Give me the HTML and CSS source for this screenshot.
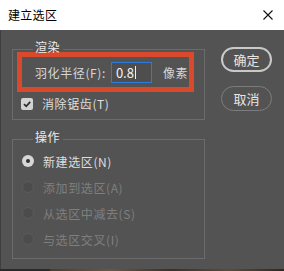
FILE: index.html
```html
<!DOCTYPE html>
<html lang="zh">
<head>
<meta charset="utf-8">
<title>建立选区</title>
<link rel="stylesheet" href="styles.css">
</head>
<body>
<div class="win">
  <div class="titlebar">
    <span class="title">建立选区</span>
    <svg class="close" viewBox="0 0 10 10" width="10" height="10"><path d="M0.5 0.5 L9.5 9.5 M9.5 0.5 L0.5 9.5" stroke="#111" stroke-width="1.1" fill="none"/></svg>
  </div>
  <div class="main">
    <div class="left">
      <div class="group g1">
        <div class="group-head"><span class="legend">渲染</span></div>
        <div class="group-body">
          <div class="mark">
            <span class="label">羽化半径(F):</span>
            <span class="field"><span class="val">0.8</span><span class="caret"></span></span>
            <span class="unit">像素</span>
          </div>
          <div class="check">
            <span class="box"><svg viewBox="0 0 12 12" width="12" height="12"><path d="M3 6.2 L5.2 8.3 L9.2 3.8" stroke="#2e2e2e" stroke-width="1.8" fill="none"/></svg></span>
            <span class="label">消除锯齿(T)</span>
          </div>
        </div>
      </div>
      <div class="group g2">
        <div class="group-head"><span class="legend">操作</span></div>
        <div class="group-body">
          <div class="radio on"><span class="dot"></span><span class="label">新建选区(N)</span></div>
          <div class="radio off"><span class="dot"></span><span class="label">添加到选区(A)</span></div>
          <div class="radio off"><span class="dot"></span><span class="label">从选区中减去(S)</span></div>
          <div class="radio off"><span class="dot"></span><span class="label">与选区交叉(I)</span></div>
        </div>
      </div>
    </div>
    <div class="right">
      <button class="btn primary">确定</button>
      <button class="btn">取消</button>
    </div>
  </div>
  <div class="strip"></div>
</div>
</body>
</html>
```
FILE: styles.css
```css
* { box-sizing: border-box; }
html, body { margin: 0; padding: 0; }
body {
  width: 284px;
  height: 271px;
  overflow: hidden;
  background: #2e2e2e;
  font-family: "Noto Sans CJK SC", "Microsoft YaHei", sans-serif;
  font-size: 12px;
}
.win {
  display: flex;
  flex-direction: column;
  height: 271px;
}
.titlebar {
  height: 30px;
  flex: none;
  background: #ffffff;
  display: flex;
  align-items: center;
  justify-content: space-between;
  padding: 0 11px 0 8px;
  color: #000;
}
.title { line-height: 12px; font-size: 12px; letter-spacing: 0.3px; }
.close { display: block; }
.main {
  height: 239px;
  flex: none;
  background: #535353;
  border-left: 1px solid #3f3f3f;
  display: flex;
  padding: 11px 0 0 11px;
}
.left {
  width: 193px;
  display: flex;
  flex-direction: column;
}
.label { letter-spacing: 0.6px; }
.group-head {
  display: flex;
  height: 12px;
  line-height: 12px;
  color: #ededed;
}
.group-head::before {
  content: "";
  width: 20px;
  margin-top: 8px;
  border-top: 1px solid #6b6b6b;
  border-left: 1px solid #6b6b6b;
}
.group-head::after {
  content: "";
  flex: 1;
  margin-top: 8px;
  border-top: 1px solid #6b6b6b;
  border-right: 1px solid #6b6b6b;
}
.legend { padding: 0 3px 0 2px; letter-spacing: 0.5px; }
.group-body {
  border: 1px solid #6b6b6b;
  border-top: none;
}
.g1 .group-body { padding: 0 0 9px 4px; }
.mark {
  width: 177px;
  height: 40px;
  margin-top: -1px;
  border: 5px solid #d84a2b;
  display: flex;
  align-items: center;
  padding-left: 13px;
  color: #d6d6d6;
}
.field {
  width: 41px;
  height: 21px;
  margin-left: 5px;
  border: 1px solid #2f7bdc;
  background: #4e4e4e;
  display: flex;
  align-items: center;
  padding-left: 4px;
  color: #f4f4f4;
  font-size: 13px;
}
.caret {
  width: 1px;
  height: 13px;
  background: #f0f0f0;
  margin-left: 1px;
}
.unit { margin-left: 11px; letter-spacing: 0.6px; }
.check {
  display: flex;
  align-items: center;
  height: 13px;
  margin-top: 5px;
  padding-left: 4px;
  color: #dedede;
}
.box {
  width: 12px;
  height: 12px;
  border-radius: 2px;
  background: #d3d3d3;
  margin-right: 9px;
  display: flex;
}
.box svg { display: block; }
.g2 { margin-top: 11px; }
.g2 .group-body { padding: 5px 0 6px 9px; }
.radio {
  display: flex;
  align-items: center;
  height: 26px;
}
.dot {
  width: 12px;
  height: 12px;
  border-radius: 50%;
  margin-right: 9px;
  display: flex;
  align-items: center;
  justify-content: center;
}
.on .dot { background: #d6d6d6; }
.on .dot::after {
  content: "";
  width: 4px;
  height: 4px;
  border-radius: 50%;
  background: #2f2f2f;
}
.on .label { color: #dedede; }
.off .dot { background: #4c4c4c; border: 1px solid #5c5c5c; }
.off .label { color: #7f7f7f; }
.right {
  margin-left: 16px;
  padding-top: 6px;
  display: flex;
  flex-direction: column;
  gap: 14px;
}
.btn {
  width: 51px;
  height: 25px;
  border-radius: 13px;
  border: 1px solid #7d7d7d;
  background: transparent;
  color: #e6e6e6;
  font-family: inherit;
  font-size: 13px;
  padding: 0;
  line-height: 1;
}
.btn.primary { border: 2px solid #c9c9c9; }
.strip {
  height: 2px;
  flex: none;
  background: linear-gradient(to right, #2a2a2a 0, #2a2a2a 50px, #4a3c30 50px, #6a5646 110px, #3a312a 170px, #5a4a3c 230px, #2d2824 284px);
}
```
